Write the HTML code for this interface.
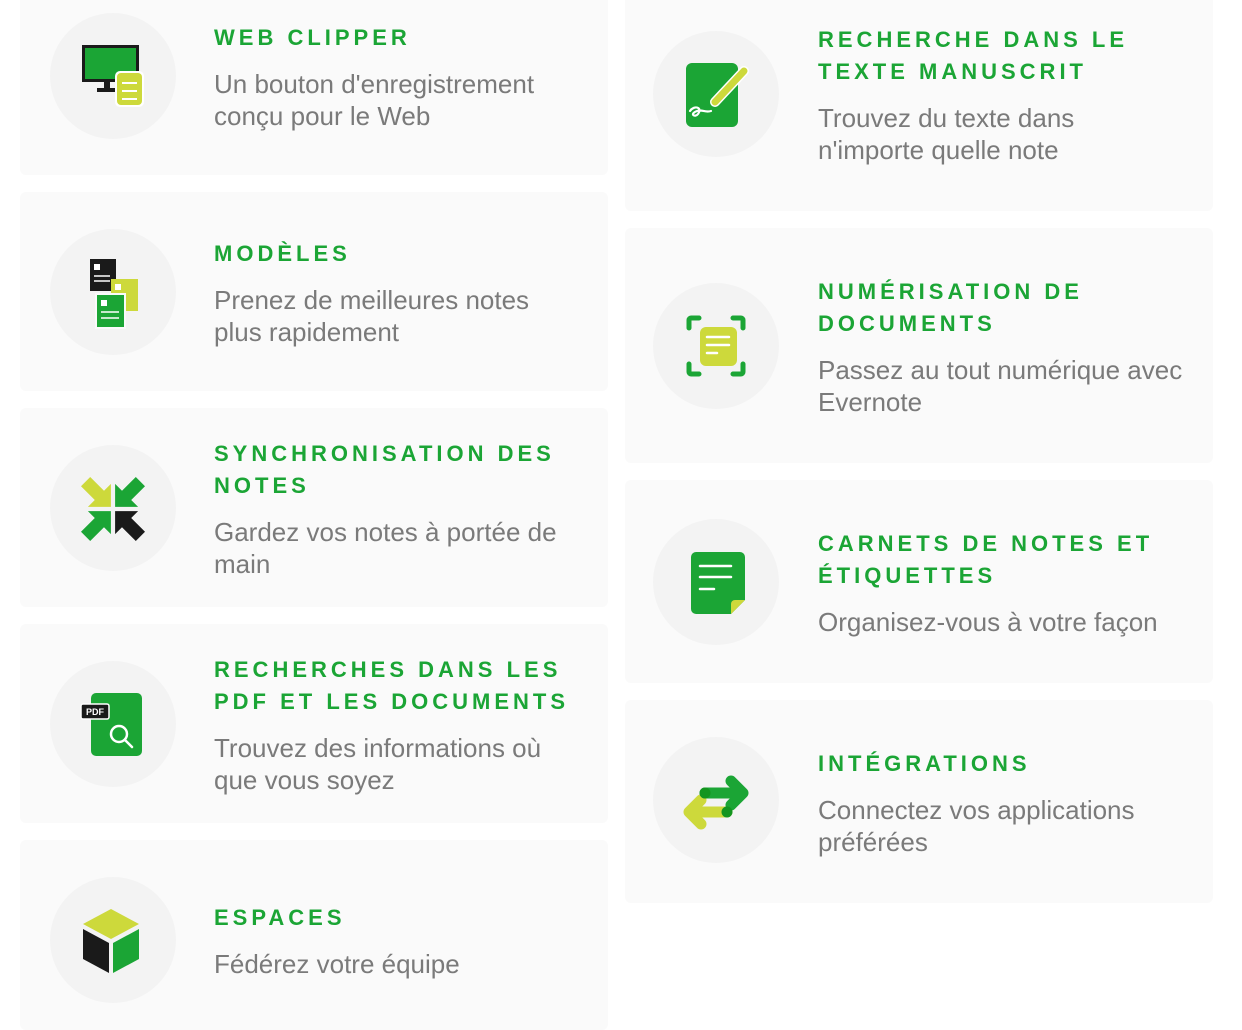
<!DOCTYPE html>
<html><head><meta charset="utf-8"><style>
body{margin:0;width:1242px;height:1016px;background:#fff;position:relative;overflow:hidden;font-family:"Liberation Sans",sans-serif}
.card{position:absolute;background:#fafafa;border-radius:6px}
.c{position:absolute;width:126px;height:126px;border-radius:50%;background:#f3f3f3}
svg{position:absolute;width:80px;height:80px}
.t{position:absolute;color:#1ba535;font-weight:bold;font-size:22px;letter-spacing:4px;line-height:32px;white-space:nowrap}
.d{position:absolute;color:#7a7a7a;font-size:26px;line-height:32px;white-space:nowrap}
</style></head><body>
<div class="card" style="left:20px;top:-6px;width:588px;height:181px"></div>
<div class="card" style="left:20px;top:192px;width:588px;height:199px"></div>
<div class="card" style="left:20px;top:408px;width:588px;height:199px"></div>
<div class="card" style="left:20px;top:624px;width:588px;height:199px"></div>
<div class="card" style="left:20px;top:840px;width:588px;height:190px"></div>
<div class="card" style="left:625px;top:-6px;width:588px;height:217px"></div>
<div class="card" style="left:625px;top:228px;width:588px;height:235px"></div>
<div class="card" style="left:625px;top:480px;width:588px;height:203px"></div>
<div class="card" style="left:625px;top:700px;width:588px;height:203px"></div>

<div class="c" style="left:50px;top:13px"></div>
<div class="c" style="left:50px;top:229px"></div>
<div class="c" style="left:50px;top:445px"></div>
<div class="c" style="left:50px;top:661px"></div>
<div class="c" style="left:50px;top:877px"></div>
<div class="c" style="left:653px;top:31px"></div>
<div class="c" style="left:653px;top:283px"></div>
<div class="c" style="left:653px;top:519px"></div>
<div class="c" style="left:653px;top:737px"></div>

<svg style="left:73px;top:36px" viewBox="0 0 80 80">
<rect x="9" y="9" width="57" height="37" fill="#1a1a1a"/><rect x="12" y="12" width="51" height="31" fill="#1ba535"/>
<rect x="31" y="46" width="6" height="6" fill="#1a1a1a"/><rect x="24" y="52" width="20" height="4" fill="#1a1a1a"/>
<rect x="42" y="35" width="29" height="36" rx="5" fill="#fff"/><rect x="44" y="37" width="25" height="32" rx="4" fill="#cdd93b"/>
<path d="M49 47h15M49 55h15M49 63h15" stroke="#fff" stroke-width="2"/></svg>
<svg style="left:73px;top:252px" viewBox="0 0 80 80">
<rect x="17" y="7" width="26" height="32" fill="#1a1a1a"/><rect x="21" y="12" width="6" height="6" fill="#fff"/><path d="M21 24h16M21 29h16" stroke="#fff" stroke-width="1.5"/>
<rect x="38" y="27" width="27" height="32" fill="#cdd93b"/><rect x="42" y="32" width="6" height="6" fill="#fff"/>
<rect x="22" y="41" width="31" height="36" fill="#fafafa"/>
<rect x="24" y="43" width="27" height="32" fill="#1ba535"/><rect x="28" y="48" width="6" height="6" fill="#fff"/><path d="M28 60h18M28 66h18" stroke="#fff" stroke-width="1.5"/></svg>
<svg style="left:73px;top:468px" viewBox="0 0 80 80">
<g transform="translate(8,9) scale(1.15)"><polygon points="26,26 6,26 12,20 0,8 8,0 20,12 26,6" fill="#cdd93b"/></g>
<g transform="translate(72,9) scale(-1.15,1.15)"><polygon points="26,26 6,26 12,20 0,8 8,0 20,12 26,6" fill="#1ba535"/></g>
<g transform="translate(8,73) scale(1.15,-1.15)"><polygon points="26,26 6,26 12,20 0,8 8,0 20,12 26,6" fill="#1ba535"/></g>
<g transform="translate(72,73) scale(-1.15,-1.15)"><polygon points="26,26 6,26 12,20 0,8 8,0 20,12 26,6" fill="#1a1a1a"/></g></svg>
<svg style="left:73px;top:684px" viewBox="0 0 80 80">
<rect x="18" y="9" width="51" height="63" rx="5" fill="#1ba535"/>
<circle cx="46" cy="50" r="8" fill="none" stroke="#fff" stroke-width="2.5"/><path d="M52 56l7 7" stroke="#fff" stroke-width="2.5" stroke-linecap="round"/>
<rect x="8" y="20" width="28" height="15" rx="2" fill="#1a1a1a" stroke="#fff" stroke-width="1.5"/>
<text x="22" y="31" font-size="9" font-weight="bold" fill="#fff" text-anchor="middle" font-family="Liberation Sans">PDF</text></svg>
<svg style="left:73px;top:900px" viewBox="0 0 80 80">
<polygon points="38,9 66,24 38,39 10,24" fill="#cdd93b"/>
<polygon points="10,29 36,43 36,73 10,59" fill="#1a1a1a"/>
<polygon points="66,29 40,43 40,73 66,59" fill="#1ba535"/></svg>
<svg style="left:676px;top:54px" viewBox="0 0 80 80">
<rect x="10" y="9" width="52" height="64" rx="6" fill="#1ba535"/>
<path d="M39 48L68 17" stroke="#fff" stroke-width="10" stroke-linecap="round"/>
<path d="M39 48L68 17" stroke="#cdd93b" stroke-width="7" stroke-linecap="round"/>
<path d="M14 57c4-6 13-4 8 3-3 4-9 0-1-3 5-2 8 2 14 0" fill="none" stroke="#fff" stroke-width="2.2" stroke-linecap="round"/></svg>
<svg style="left:676px;top:306px" viewBox="0 0 80 80">
<path d="M13 22v-8a2 2 0 0 1 2-2h8M57 12h8a2 2 0 0 1 2 2v8M67 58v8a2 2 0 0 1-2 2h-8M23 68h-8a2 2 0 0 1-2-2v-8" fill="none" stroke="#1ba535" stroke-width="5" stroke-linecap="round"/>
<rect x="24" y="21" width="37" height="39" rx="6" fill="#cdd93b"/>
<path d="M31 31h22M31 39h22M31 47h10" stroke="#fff" stroke-width="2.5" stroke-linecap="round"/></svg>
<svg style="left:676px;top:542px" viewBox="0 0 80 80">
<path d="M20 10h44a5 5 0 0 1 5 5v43l-14 14h-35a5 5 0 0 1-5-5v-52a5 5 0 0 1 5-5z" fill="#1ba535"/>
<path d="M55 72v-10a4 4 0 0 1 4-4h10z" fill="#cdd93b"/>
<path d="M24 24h31M24 35h31M24 47h14" stroke="#fff" stroke-width="2.5" stroke-linecap="round"/></svg>
<svg style="left:676px;top:760px" viewBox="0 0 80 80">
<path d="M51 52h-36M25 40l-12 12 12 12" fill="none" stroke="#cdd93b" stroke-width="11" stroke-linecap="round" stroke-linejoin="round"/>
<path d="M29 33h36M55 21l12 12-12 12" fill="none" stroke="#1ba535" stroke-width="11" stroke-linecap="round" stroke-linejoin="round"/>
<circle cx="29" cy="33" r="5.5" fill="#13951f"/><circle cx="51" cy="52" r="5.5" fill="#13951f"/></svg>

<div class="t" style="left:214px;top:22px">WEB CLIPPER</div>
<div class="d" style="left:214px;top:68px">Un bouton d'enregistrement<br>conçu pour le Web</div>
<div class="t" style="left:214px;top:238px">MODÈLES</div>
<div class="d" style="left:214px;top:284px">Prenez de meilleures notes<br>plus rapidement</div>
<div class="t" style="left:214px;top:438px">SYNCHRONISATION DES<br>NOTES</div>
<div class="d" style="left:214px;top:516px">Gardez vos notes à portée de<br>main</div>
<div class="t" style="left:214px;top:654px">RECHERCHES DANS LES<br>PDF ET LES DOCUMENTS</div>
<div class="d" style="left:214px;top:732px">Trouvez des informations où<br>que vous soyez</div>
<div class="t" style="left:214px;top:902px">ESPACES</div>
<div class="d" style="left:214px;top:948px">Fédérez votre équipe</div>

<div class="t" style="left:818px;top:24px">RECHERCHE DANS LE<br>TEXTE MANUSCRIT</div>
<div class="d" style="left:818px;top:102px">Trouvez du texte dans<br>n'importe quelle note</div>
<div class="t" style="left:818px;top:276px">NUMÉRISATION DE<br>DOCUMENTS</div>
<div class="d" style="left:818px;top:354px">Passez au tout numérique avec<br>Evernote</div>
<div class="t" style="left:818px;top:528px">CARNETS DE NOTES ET<br>ÉTIQUETTES</div>
<div class="d" style="left:818px;top:606px">Organisez-vous à votre façon</div>
<div class="t" style="left:818px;top:748px">INTÉGRATIONS</div>
<div class="d" style="left:818px;top:794px">Connectez vos applications<br>préférées</div>
</body></html>
